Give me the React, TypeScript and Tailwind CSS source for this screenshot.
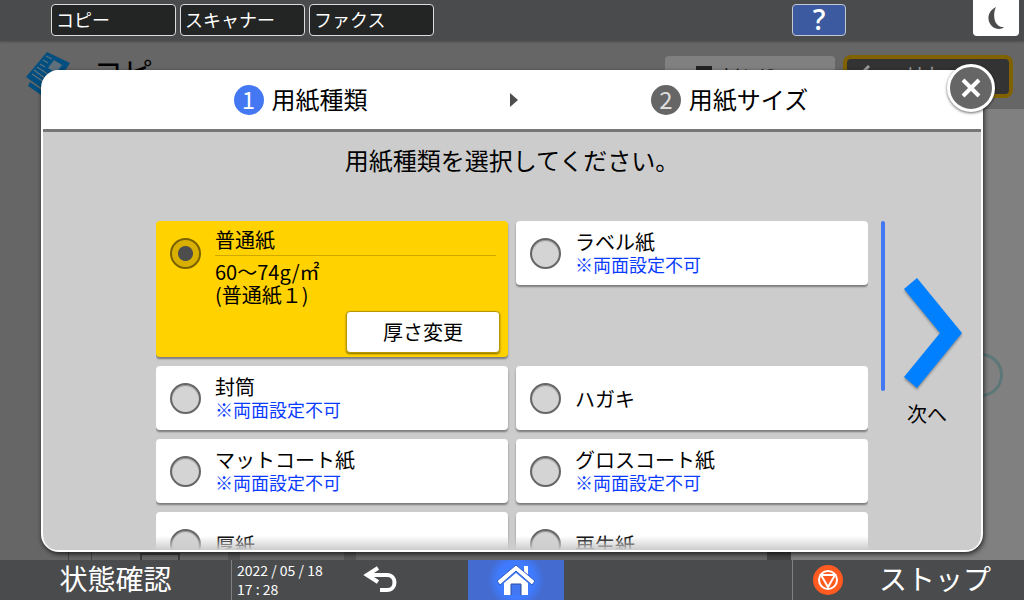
import React, { useState } from "react";
import clsx from "clsx";

const paperTypes = [
  { id: "plain", label: "普通紙" },
  { id: "label", label: "ラベル紙", note: "※両面設定不可" },
  { id: "envelope", label: "封筒", note: "※両面設定不可" },
  { id: "postcard", label: "ハガキ" },
  { id: "matte", label: "マットコート紙", note: "※両面設定不可" },
  { id: "gloss", label: "グロスコート紙", note: "※両面設定不可" },
  { id: "thick", label: "厚紙" },
  { id: "recycled", label: "再生紙" },
];

const tabs = ["コピー", "スキャナー", "ファクス"];

const TopBar = () => (
  <header className="relative flex h-[41px] shrink-0 items-start bg-[#4a4b4d] pr-[5px] pl-[51px] shadow-[0_1px_2px_rgba(0,0,0,0.25)]">
    <nav className="mt-1 flex gap-1">
      {tabs.map((tab) => (
        <button
          key={tab}
          className="flex h-8 w-[125px] items-center rounded border border-[#dcdcdc] bg-[#222523] px-1 pb-0.5 text-lg leading-none text-white"
        >
          {tab}
        </button>
      ))}
    </nav>
    <button
      aria-label="ヘルプ"
      className="mt-1 ml-auto flex h-8 w-[54px] items-center justify-center rounded border border-[#c4c8d4] bg-[#3b5a9f] pb-0.5 font-['Open_Sans',sans-serif] text-[28px] leading-none font-semibold text-white"
    >
      ?
    </button>
    <button
      aria-label="省エネ"
      className="ml-[127px] flex h-9 w-[46px] items-center justify-center rounded-b bg-white"
    >
      <svg width="18" height="24" viewBox="0 0 18 24" fill="#4a4b4d">
        <path d="M9 1C4 3.500 1 8 1.500 13C2 19 7 23 12 23C14 23 16 22 17 21C12 21.500 8.500 18 7.500 13C6.700 9 7.300 4 9 1Z" />
      </svg>
    </button>
  </header>
);

const CopyScreen = () => (
  <div className="flex flex-1 flex-col overflow-hidden bg-[#666666]">
    <div className="flex h-[68px] shrink-0 items-start pr-[11px] pl-[25px]">
      <svg className="mt-2.5" width="48" height="48" viewBox="0 0 48 48">
        <path fill="#004f80" d="M22 1L45 12L25 43L1 26Z" />
        <path fill="#004f80" d="M5 31L24 44L22 48L3 35Z" />
        <path fill="#5d707c" d="M29 9L37 14L31 22L23 17Z" />
        <path
          stroke="#5d707c"
          strokeWidth="1.300"
          d="M21 5l6 3M18 9l5 3M15 13l5 3M12 16l12 8M9 19l12 9M7 23l12 8"
        />
      </svg>
      <h1 className="mt-3.5 ml-5 text-[30px] leading-8 text-black">コピー</h1>
      <button className="mt-[15px] ml-auto flex h-11 w-[170px] items-start gap-2 rounded bg-[#808080] pt-2.5 pl-[31px] text-xl leading-6 text-black">
        <svg width="16" height="16" viewBox="0 0 16 16">
          <rect width="16" height="5" fill="#222" />
          <rect y="8" width="16" height="6" fill="#222" />
        </svg>
        割り込み
      </button>
      <button className="mt-3.5 ml-2 flex h-[43px] w-[170px] items-start gap-7 rounded-lg border-4 border-[#806300] bg-[#333333] pt-1 pl-3 text-xl leading-6 text-[#999999]">
        <svg className="mt-0.5" width="18" height="20" viewBox="0 0 18 20" fill="none" stroke="#999" strokeWidth="3">
          <path d="M10 1L2 9L10 17" />
        </svg>
        リセット
      </button>
    </div>
    <div className="flex flex-1">
      <div className="flex flex-1 items-end gap-12 bg-[#666666] pl-[68px]">
        <span className="h-4 w-6 border-x border-[#444]" />
        <span className="h-[7px] w-10 border-2 border-b-0 border-[#3d3d3d]" />
        <span className="h-4 w-32 border-x-12 border-[#555]" />
        <span className="ml-auto h-2 w-6 bg-[#444]" />
      </div>
      <div className="flex w-[233px] flex-col items-end overflow-hidden bg-[#808080] pt-[244px] pr-[21px]">
        <span className="size-11 rounded-full border-[3px] border-[#5b7777]" />
      </div>
    </div>
  </div>
);

interface PaperCardProps {
  id: string;
  label: string;
  note?: string;
  checked: boolean;
  onSelect: (id: string) => void;
}

const PaperCard: React.FC<PaperCardProps> = ({ id, label, note, checked, onSelect }) => (
  <div
    className={clsx(
      "flex flex-col self-start rounded shadow-[0_2px_2px_rgba(0,0,0,0.4)]",
      checked ? "h-[136px] bg-[#ffd200]" : "h-[64px] bg-white"
    )}
  >
    <label className="flex gap-3.5 pr-3 pl-3.5">
      <input
        type="radio"
        name="paper"
        checked={checked}
        onChange={() => onSelect(id)}
        className={clsx(
          "mt-[17px] size-[31px] shrink-0 appearance-none rounded-full border-2",
          checked
            ? "border-[#7a6200] bg-[#d9b000] bg-[radial-gradient(circle,#4d4d4d_7px,transparent_8px)]"
            : "border-[#666666] bg-[#d4d4d4] shadow-[inset_0_1px_1px_rgba(0,0,0,0.3)]"
        )}
      />
      {checked ? (
        <span className="flex flex-1 flex-col pt-[7px] text-xl leading-[23px]">
          <span className="mb-1 border-b border-[#d0a800] pb-1">{label}</span>
          <span>60〜74g/㎡</span>
          <span>(普通紙１)</span>
        </span>
      ) : (
        <span className="flex h-16 flex-1 flex-col justify-center text-xl leading-[23px]">
          {label}
          {note && <span className="text-lg leading-[23px] text-[#0a3cff]">{note}</span>}
        </span>
      )}
    </label>
    {checked && (
      <button className="mt-auto mr-2 mb-1 h-[42px] w-[154px] self-end rounded border border-[#b89800] bg-white text-xl leading-none shadow-[0_1px_2px_rgba(0,0,0,0.5)]">
        厚さ変更
      </button>
    )}
  </div>
);

const Step = ({ no, label, active }: { no: number; label: string; active?: boolean }) => (
  <div className="flex items-center gap-2">
    <span
      className={clsx(
        "flex size-[30px] items-center justify-center rounded-full pb-0.5 text-2xl leading-none",
        active ? "bg-[#4477f2] text-white" : "bg-[#666666] text-[#dddddd]"
      )}
    >
      {no}
    </span>
    <span className="pb-0.5 text-2xl leading-8">{label}</span>
  </div>
);

const PaperDialog = () => {
  const [selected, setSelected] = useState("plain");

  return (
    <div
      role="dialog"
      aria-label="用紙種類"
      className="absolute inset-x-[41px] top-[70px] bottom-12 flex flex-col rounded-[18px] border-2 border-t-0 border-white bg-[#cccccc] text-black shadow-[1px_2px_5px_rgba(0,0,0,0.7)]"
    >
      <div className="grid h-[62px] shrink-0 grid-cols-[1fr_8px_1fr] items-center rounded-t-[16px] border-b-[3px] border-[#777777] bg-white pl-1">
        <div className="flex justify-center pl-11">
          <Step no={1} label="用紙種類" active />
        </div>
        <svg width="8" height="14" viewBox="0 0 8 14" fill="#4d4d4d">
          <path d="M0 0L8 7L0 14Z" />
        </svg>
        <div className="flex justify-center pr-10">
          <Step no={2} label="用紙サイズ" />
        </div>
      </div>

      <h2 className="shrink-0 pt-3 text-center text-2xl leading-8">用紙種類を選択してください。</h2>

      <div className="mt-[45px] flex min-h-0 flex-1 pr-[19px] pl-[113px]">
        <div className="grid min-h-0 flex-1 auto-rows-max grid-cols-2 content-start gap-x-2 gap-y-[9px] overflow-hidden">
          {paperTypes.map((paper) => (
            <PaperCard
              key={paper.id}
              {...paper}
              checked={selected === paper.id}
              onSelect={setSelected}
            />
          ))}
        </div>
        <div className="ml-[13px] h-[170px] w-1 rounded-full bg-[#4477f2]" />
        <button className="mt-[57px] ml-[19px] flex w-[58px] flex-col items-center self-start text-xl leading-6">
          <svg
            className="overflow-visible drop-shadow-[0_2px_1px_rgba(0,0,0,0.3)]"
            width="58"
            height="110"
            viewBox="0 0 58 110"
            fill="#0080ff"
          >
            <path d="M13 0L58 55L13 110L0 99L36 55L0 11Z" />
          </svg>
          <span className="mt-3.5 mr-3">次へ</span>
        </button>
      </div>

      {/* fade over the clipped last row */}
      <div className="pointer-events-none absolute inset-x-0 bottom-0 h-3.5 rounded-b-[16px] bg-linear-to-b from-transparent to-[#cccccc]" />

      <button
        aria-label="閉じる"
        className="absolute -top-1.5 -right-3.5 flex size-12 items-center justify-center rounded-full border-[3px] border-white bg-[#666666] shadow-[0_1px_3px_rgba(0,0,0,0.6)]"
      >
        <svg width="20" height="20" viewBox="0 0 20 20" stroke="#fff" strokeWidth="4">
          <path d="M2 2L18 18M18 2L2 18" />
        </svg>
      </button>
    </div>
  );
};

const BottomBar = () => (
  <footer className="flex h-10 shrink-0 bg-[#4a4b4d] text-white">
    <div className="flex flex-1">
      <button className="w-[232px] border-r border-[#808080] pb-1 text-[28px] leading-none">
        状態確認
      </button>
      <div className="flex w-[100px] flex-col justify-center pl-[5px] text-sm leading-[19px] whitespace-nowrap">
        <span>2022 / 05 / 18</span>
        <span>17 : 28</span>
      </div>
      <button aria-label="戻る" className="flex w-24 items-center justify-center">
        <svg width="34" height="28" viewBox="0 0 34 28" fill="none" stroke="#fff" strokeWidth="4">
          <path d="M15 2L4 9L15 16" />
          <path d="M4 9H24C34 9 34 24 24 24H17" />
        </svg>
      </button>
    </div>
    <button
      aria-label="ホーム"
      className="flex w-24 items-center justify-center bg-[#446bd0] bg-[radial-gradient(circle,#3f7bff_18px,#446bd0_28px)]"
    >
      <svg width="40" height="34" viewBox="0 0 40 34" fill="#fff">
        <path d="M8 20L20 10L32 20V32H8Z" />
        <path d="M28 3H32V13L28 9Z" />
        <path
          d="M20 2L39 18L36 22L20 8L4 22L1 18Z"
          stroke="#2c5bc4"
          strokeWidth="1"
          strokeLinejoin="round"
        />
        <path d="M15 32V21H25V32" fill="#4477f2" stroke="#2c4c9e" />
      </svg>
    </button>
    <div className="w-[228px]" />
    <button className="flex w-[232px] items-center border-l border-[#808080] pl-5 text-[28px] leading-none">
      <svg width="30" height="30" viewBox="0 0 30 30" fill="none" stroke="#fff">
        <circle cx="15" cy="15" r="15" fill="#ff5a1f" stroke="none" />
        <circle cx="15" cy="15" r="9" strokeWidth="2" />
        <path d="M8 10H22L15 22Z" strokeWidth="2" />
      </svg>
      <span className="ml-9 pb-1">ストップ</span>
    </button>
  </footer>
);

export default function App() {
  return (
    <div className="relative flex h-screen flex-col overflow-hidden bg-[#666666] font-['Noto_Sans_CJK_JP',sans-serif]">
      <TopBar />
      <CopyScreen />
      <PaperDialog />
      <BottomBar />
    </div>
  );
}
